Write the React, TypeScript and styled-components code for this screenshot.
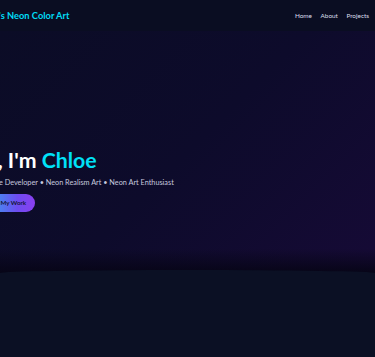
import React from "react";
import styled, { createGlobalStyle } from "styled-components";

const Global = createGlobalStyle`
  html, body { margin: 0; padding: 0; background: #0b1024; }
  body { overflow: hidden; font-family: Lato, "Noto Sans", sans-serif; }
  * { box-sizing: border-box; }
`;

const Page = styled.div`
  width: 375px;
  height: 357px;
  overflow: hidden;
  background: #0b1024;
  display: flex;
  flex-direction: column;
`;

const Nav = styled.nav`
  height: 31px;
  flex: none;
  display: flex;
  justify-content: flex-end;
  background: #0a0d22;
`;

const NavInner = styled.div`
  width: 400px;
  flex: none;
  display: flex;
  align-items: center;
  justify-content: space-between;
  padding: 0 6px 0 0;
`;

const Logo = styled.div`
  color: #00dcf5;
  font-weight: 700;
  font-size: 9.3px;
  white-space: nowrap;
`;

const Links = styled.div`
  display: flex;
  gap: 8.5px;
`;

const Link = styled.a`
  color: #dcdfec;
  font-size: 6.4px;
  text-decoration: none;
`;

const Hero = styled.section`
  height: 242px;
  flex: none;
  display: flex;
  justify-content: flex-end;
  background: linear-gradient(180deg, transparent 90%, #070517 100%),
    linear-gradient(135deg, #0b0c26 0%, #0d0b2b 50%, #160a36 100%);
`;

const HeroInner = styled.div`
  width: 400px;
  flex: none;
  padding: 116px 0 0 1px;
`;

const Title = styled.h1`
  margin: 0;
  font-size: 21.3px;
  font-weight: 700;
  color: #ffffff;
  line-height: 26px;
  white-space: nowrap;
`;

const Name = styled.span`
  color: #00e1f7;
`;

const Subtitle = styled.p`
  margin: 4px 0 0;
  font-size: 7.3px;
  color: #c6c9df;
  white-space: nowrap;
  line-height: 12px;
`;

const Button = styled.button`
  margin-top: 4px;
  height: 18px;
  padding: 0 9px;
  border: none;
  border-radius: 9px;
  background: linear-gradient(90deg, #22c4f0 0%, #6d4cf0 70%, #8a3ff0 100%);
  color: #151535;
  font-family: inherit;
  font-size: 6.2px;
  font-weight: 700;
  white-space: nowrap;
`;

const Lower = styled.section`
  flex: 1;
  background: #0b1024;
  margin-top: -3px;
  border-radius: 50% 50% 0 0 / 3px 3px 0 0;
`;

export default function App() {
  return (
    <>
      <Global />
      <Page>
        <Nav>
          <NavInner>
            <Logo>Chloe's Neon Color Art</Logo>
            <Links>
              <Link href="#">Home</Link>
              <Link href="#">About</Link>
              <Link href="#">Projects</Link>
            </Links>
          </NavInner>
        </Nav>
        <Hero>
          <HeroInner>
            <Title>
              Hi, I'm <Name>Chloe</Name>
            </Title>
            <Subtitle>Creative Developer • Neon Realism Art • Neon Art Enthusiast</Subtitle>
            <Button>View My Work</Button>
          </HeroInner>
        </Hero>
        <Lower />
      </Page>
    </>
  );
}
